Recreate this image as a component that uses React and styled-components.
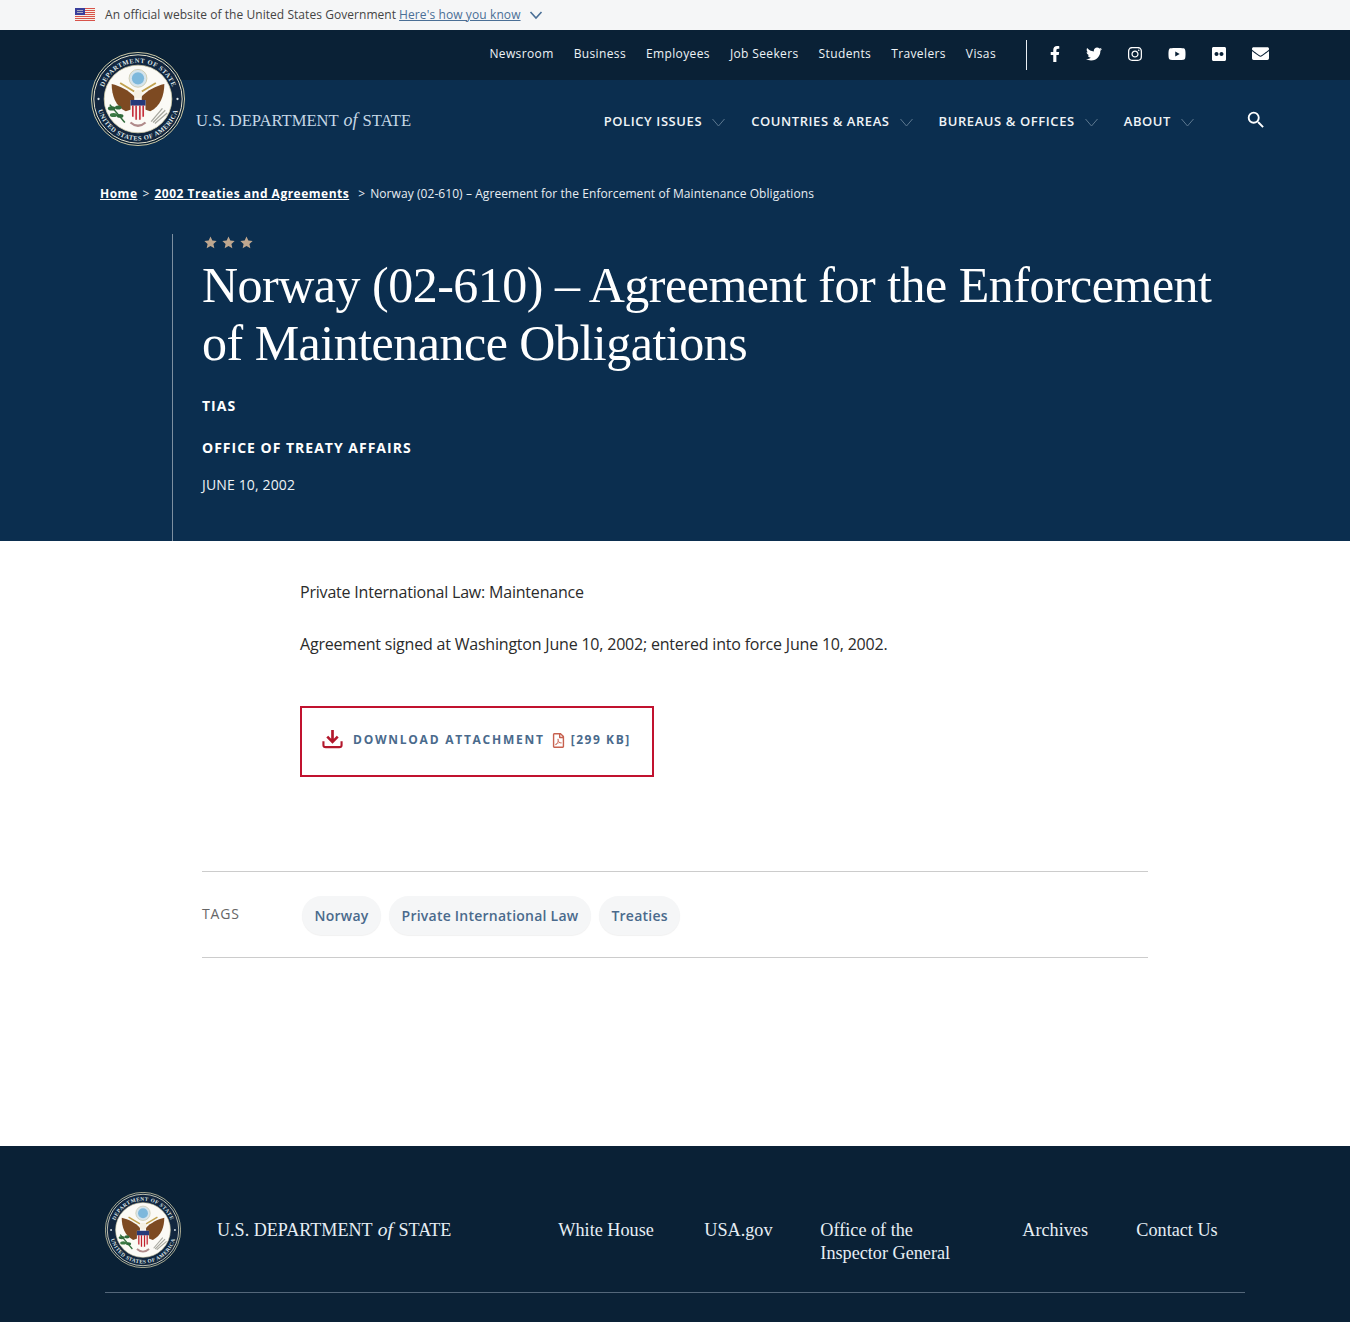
import React from 'react';
import styled, { createGlobalStyle } from 'styled-components';
import { FaFacebookF, FaTwitter, FaInstagram, FaYoutube, FaFlickr, FaEnvelope, FaRegFilePdf } from 'react-icons/fa';
import { MdSearch } from 'react-icons/md';

const GlobalStyle = createGlobalStyle`
  html, body { margin: 0; padding: 0; background: #fff; }
  body { font-family: "Open Sans", "Liberation Sans", sans-serif; color: #222; }
  * { box-sizing: border-box; }
  a { color: inherit; }
`;

const SERIF = '"Liberation Serif", "Times New Roman", serif';

const GovBanner = styled.div`
  height: 30px;
  background: #f5f6f7;
  display: flex;
  align-items: center;
  padding: 0 0 2px 75px;
  font-size: 12px;
  letter-spacing: 0.05px;
  color: #444;
`;
const GovText = styled.span`
  margin-left: 10px;
  white-space: nowrap;
`;
const GovLink = styled.a`
  margin-left: 3px;
  letter-spacing: 0.1px;
  color: #4a6f96;
  text-decoration: underline;
`;
const GovChevron = styled.svg`
  margin: 2px 0 0 8px;
  width: 14px;
  height: 10px;
`;

const Header = styled.header`
  position: relative;
`;
const TopBar = styled.div`
  height: 50px;
  background: #0a2136;
  display: flex;
  align-items: center;
  justify-content: flex-end;
  padding: 0 65px 3px 0;
`;
const TopLinks = styled.nav`
  display: flex;
  gap: 20px;
  font-size: 12px;
  letter-spacing: 0.37px;
  color: #eef3f7;
`;
const TopDivider = styled.div`
  width: 1px;
  height: 30px;
  background: #e8eef3;
  margin: 3px 14px 0 30px;
`;
const Socials = styled.div`
  display: flex;
  align-items: center;
  color: #fff;
`;
const SocialSlot = styled.span`
  width: ${p => p.$w}px;
  display: flex;
  justify-content: center;
  font-size: ${p => p.$size || 16}px;
`;
const SealSlot = styled.div`
  position: absolute;
  left: ${p => p.$x}px;
  top: ${p => p.$y}px;
  line-height: 0;
`;

const Hero = styled.section`
  background: #0b2e4f;
  height: 461px;
  color: #fff;
`;
const MainNav = styled.div`
  height: 98px;
  display: flex;
  align-items: flex-start;
  padding: 0 85px 0 196px;
`;
const Wordmark = styled.div`
  font-family: ${SERIF};
  color: ${p => p.$footer ? '#e6eef4' : '#c5d8e6'};
  font-size: ${p => p.$footer ? 18.1 : 16.6}px;
  white-space: nowrap;
  em { font-size: 1.08em; margin: 0 1px; }
`;
const HeaderWordmark = styled(Wordmark)`
  margin-top: 30px;
`;
const NavItems = styled.nav`
  margin-left: auto;
  margin-top: 31px;
  display: flex;
  align-items: center;
  gap: 26px;
  font-size: 13px;
  font-weight: 600;
  letter-spacing: 0.58px;
  text-transform: uppercase;
  color: #f0f4f7;
`;
const NavItem = styled.span`
  display: flex;
  align-items: center;
  gap: 10px;
  white-space: nowrap;
`;
const NavChevron = styled.svg`
  width: 13px;
  height: 9px;
  margin-top: 2px;
`;
const SearchWrap = styled.span`
  margin-left: 25px;
  margin-top: -2px;
  margin-right: -2px;
  display: flex;
  font-size: 22px;
  color: #fff;
`;

const Crumbs = styled.div`
  padding-left: 100px;
  height: 56px;
  padding-top: 7px;
  font-size: 12px;
  letter-spacing: 0.07px;
  color: #e8edf2;
  white-space: nowrap;
`;
const CrumbLink = styled.a`
  font-weight: 700;
  letter-spacing: 0.5px;
  color: #fff;
  text-decoration: underline;
`;
const CrumbSep = styled.span`
  margin: 0 ${p => p.$right || 5}px 0 ${p => p.$left || 5}px;
`;
const HeroBody = styled.div`
  margin-left: 172px;
  border-left: 1px solid #7d8fa0;
  padding-left: 29px;
  height: 307px;
`;
const Stars = styled.div`
  display: flex;
  gap: 5px;
  padding-left: 2px;
  padding-top: 2px;
  height: 18px;
  color: #bfa78f;
`;
const Title = styled.h1`
  margin: 4px 0 0;
  width: 1030px;
  font-family: ${SERIF};
  font-weight: 400;
  font-size: 50px;
  line-height: 58px;
  letter-spacing: -0.5px;
  color: #fff;
`;
const HeroLabel = styled.div`
  font-size: 14px;
  font-weight: 700;
  letter-spacing: 1px;
  text-transform: uppercase;
  line-height: 20px;
  margin-top: ${p => p.$top}px;
`;
const HeroDate = styled.div`
  font-size: 14px;
  letter-spacing: 0.15px;
  line-height: 20px;
  margin-top: 17px;
  color: #eef2f6;
`;

const Main = styled.main`
  height: 605px;
  padding-top: 39px;
`;
const Content = styled.div`
  padding-left: 300px;
  font-size: 16px;
  line-height: 24px;
  letter-spacing: -0.2px;
  color: #2b2b2b;
`;
const Para = styled.p`
  margin: 0 0 28px;
`;
const DownloadBox = styled.a`
  margin-top: 50px;
  width: 354px;
  height: 71px;
  border: 2px solid #c1122f;
  display: flex;
  align-items: flex-start;
  padding: 20px 0 0 20px;
  text-decoration: none;
`;
const DownloadIcon = styled.svg`
  width: 21px;
  height: 21px;
  flex: none;
`;
const DownloadText = styled.span`
  margin-left: 10px;
  margin-top: 3px;
  font-size: 12px;
  line-height: 18px;
  font-weight: 700;
  letter-spacing: 1.75px;
  color: #4a6a8c;
  white-space: nowrap;
`;
const PdfWrap = styled.span`
  display: flex;
  margin: 5px 5px 0 6px;
  font-size: 15px;
  color: #c7614f;
`;
const DownloadSize = styled(DownloadText)`
  margin-left: 0;
  letter-spacing: 1.55px;
`;

const TagsRow = styled.div`
  margin: 94px 202px 0;
  height: 87px;
  border-top: 1px solid #ccc;
  border-bottom: 1px solid #ccc;
  display: flex;
  align-items: center;
`;
const TagsLabel = styled.div`
  width: 100px;
  font-size: 14px;
  letter-spacing: 0.8px;
  color: #666;
  margin-top: -2px;
`;
const Tags = styled.div`
  display: flex;
  gap: 8px;
  padding-top: 1px;
`;
const Tag = styled.a`
  height: 39px;
  padding: 0 12.5px;
  border-radius: 20px;
  background: #f5f6f7;
  box-shadow: 0 1px 1px rgba(0, 0, 0, 0.06);
  display: flex;
  align-items: center;
  font-size: 14px;
  font-weight: 600;
  letter-spacing: 0.24px;
  color: #4a6a8c;
`;

const Footer = styled.footer`
  position: relative;
  height: 176px;
  background: #0a2136;
  padding: 0 105px;
`;
const FooterTop = styled.div`
  height: 147px;
  border-bottom: 1px solid #54677a;
  display: flex;
  align-items: flex-start;
  padding-left: 112px;
`;
const FooterWordmark = styled(Wordmark)`
  margin-top: 73px;
`;
const FooterLinks = styled.nav`
  margin-left: 107px;
  margin-top: 73px;
  display: flex;
  font-family: ${SERIF};
  font-size: 18.2px;
  line-height: 23px;
  color: #e6eef4;
`;
const FooterLink = styled.a`
  width: ${p => p.$w}px;
  padding-right: ${p => p.$pad || 0}px;
  flex: none;
`;

const Flag = () => (
  <svg width="20" height="13" viewBox="0 0 20 13">
    <rect width="20" height="13" fill="#f6efe6" />
    {[0, 2, 4, 6, 8, 10, 12].map(y => <rect key={y} y={y} width="20" height="1" fill="#d8534a" />)}
    <rect width="10" height="7" fill="#3a3f9c" />
    <rect x="2" y="2" width="6" height="1" fill="#aab" />
    <rect x="2" y="4" width="6" height="1" fill="#aab" />
  </svg>
);

const Chevron = () => (
  <NavChevron viewBox="0 0 13 9">
    <polyline points="0.5,1 6.5,8 12.5,1" fill="none" stroke="#5d7890" strokeWidth="1" />
  </NavChevron>
);

const Seal = ({ size, id }) => (
  <svg width={size} height={size} viewBox="0 0 100 100">
    <defs>
      <path id={`${id}-top`} d="M 11.5 50 A 38.5 38.5 0 0 1 88.5 50" />
      <path id={`${id}-bot`} d="M 6 50 A 44 44 0 0 0 94 50" />
    </defs>
    <circle cx="50" cy="50" r="49.5" fill="#0a2136" stroke="#d9d3ae" strokeWidth="1" />
    <circle cx="50" cy="50" r="47" fill="#12263f" stroke="#f3efd8" strokeWidth="1" />
    <circle cx="50" cy="50" r="36" fill="#fbfaf6" stroke="#d9d3ae" strokeWidth="0.8" />
    <text fontFamily={SERIF} fontSize="7" fontWeight="700" letterSpacing="0.6" fill="#dfe6ea">
      <textPath href={`#${id}-top`} startOffset="50%" textAnchor="middle">DEPARTMENT OF STATE</textPath>
    </text>
    <text fontFamily={SERIF} fontSize="7" fontWeight="700" letterSpacing="0.5" fill="#dfe6ea">
      <textPath href={`#${id}-bot`} startOffset="50%" textAnchor="middle">UNITED STATES OF AMERICA</textPath>
    </text>
    <circle cx="8" cy="50" r="1.2" fill="#dfe6ea" />
    <circle cx="92" cy="50" r="1.2" fill="#dfe6ea" />
    {/* crest */}
    <circle cx="50" cy="28" r="9.5" fill="#d5e4ec" stroke="#c9c3a0" strokeWidth="0.8" />
    <circle cx="50" cy="28" r="6.5" fill="#7db8dc" />
    {/* wings */}
    <path d="M46 47 C40 41 31 36 22 34 C22 46 26 58 37 63 L46 60 Z" fill="#7d4a22" />
    <path d="M54 47 C60 41 69 36 78 34 C78 46 74 58 63 63 L54 60 Z" fill="#7d4a22" />
    <path d="M31 33 L46 42 M69 33 L54 42" stroke="#c2a24f" strokeWidth="2" />
    <circle cx="50" cy="45" r="4.5" fill="#f5f1e4" />
    {/* shield */}
    <path d="M42 51 H58 V64 C58 69 53 72 50 73 C47 72 42 69 42 64 Z" fill="#f7f4ee" />
    <rect x="42" y="51" width="16" height="6" fill="#253a7a" />
    <path d="M44.5 57 V69 M48 57 V72 M52 57 V72 M55.5 57 V69" stroke="#c2202f" strokeWidth="1.6" />
    {/* olive and arrows */}
    <path d="M20 56 L36 75" stroke="#2f6b3a" strokeWidth="1.6" />
    <ellipse cx="22" cy="60" rx="4" ry="2.2" fill="#2f6b3a" />
    <ellipse cx="24" cy="67" rx="4" ry="2.2" fill="#3c7a44" />
    <ellipse cx="29" cy="59" rx="3.5" ry="2.2" fill="#2f6b3a" />
    <ellipse cx="31" cy="68" rx="3.5" ry="2" fill="#2f6b3a" />
    <path d="M64 74 L76 60 M66 75 L79 62 M68 76 L81 65" stroke="#a8a8a0" strokeWidth="1.4" />
    <path d="M42 75 Q50 82 58 75" stroke="#b08a8a" strokeWidth="2.4" fill="none" />
  </svg>
);

const WordmarkText = () => <>U.S. DEPARTMENT <em>of</em> STATE</>;

const topLinks = ['Newsroom', 'Business', 'Employees', 'Job Seekers', 'Students', 'Travelers', 'Visas'];
const navItems = ['Policy Issues', 'Countries & Areas', 'Bureaus & Offices', 'About'];
const tags = ['Norway', 'Private International Law', 'Treaties'];
const footerLinks = [
  { label: 'White House', w: 146 },
  { label: 'USA.gov', w: 116 },
  { label: 'Office of the Inspector General', w: 202, pad: 50 },
  { label: 'Archives', w: 114 },
  { label: 'Contact Us', w: 90 },
];

export default function App() {
  return (
    <>
      <GlobalStyle />
      <GovBanner>
        <Flag />
        <GovText>An official website of the United States Government</GovText>
        <GovLink href="#">Here's how you know</GovLink>
        <GovChevron viewBox="0 0 14 10">
          <polyline points="1.5,2 7,8 12.5,2" fill="none" stroke="#4a6f96" strokeWidth="1.6" />
        </GovChevron>
      </GovBanner>

      <Header>
        <TopBar>
          <TopLinks>
            {topLinks.map(l => <span key={l}>{l}</span>)}
          </TopLinks>
          <TopDivider />
          <Socials>
            <SocialSlot $w={28} $size={16}><FaFacebookF /></SocialSlot>
            <SocialSlot $w={50} $size={16}><FaTwitter /></SocialSlot>
            <SocialSlot $w={32} $size={16}><FaInstagram /></SocialSlot>
            <SocialSlot $w={52} $size={18}><FaYoutube /></SocialSlot>
            <SocialSlot $w={32} $size={16}><FaFlickr /></SocialSlot>
            <SocialSlot $w={50} $size={17}><FaEnvelope /></SocialSlot>
          </Socials>
        </TopBar>
        <SealSlot $x={91} $y={22}><Seal size={94} id="head" /></SealSlot>
        <Hero>
          <MainNav>
            <HeaderWordmark><WordmarkText /></HeaderWordmark>
            <NavItems>
              {navItems.map(n => (
                <NavItem key={n}>{n}<Chevron /></NavItem>
              ))}
              <SearchWrap><MdSearch /></SearchWrap>
            </NavItems>
          </MainNav>
          <Crumbs>
            <CrumbLink href="#">Home</CrumbLink>
            <CrumbSep>&gt;</CrumbSep>
            <CrumbLink href="#">2002 Treaties and Agreements</CrumbLink>
            <CrumbSep $left={9}>&gt;</CrumbSep>
            Norway (02-610) – Agreement for the Enforcement of Maintenance Obligations
          </Crumbs>
          <HeroBody>
            <Stars>
              {[0, 1, 2].map(i => (
                <svg key={i} width="13" height="13" viewBox="0 0 24 24" fill="currentColor">
                  <path d="M12 1l3.4 7.4 8 .9-6 5.4 1.7 7.9L12 18.6l-7.1 4 1.7-7.9-6-5.4 8-.9z" />
                </svg>
              ))}
            </Stars>
            <Title>Norway (02-610) – Agreement for the Enforcement of Maintenance Obligations</Title>
            <HeroLabel $top={24}>TIAS</HeroLabel>
            <HeroLabel $top={22}>Office of Treaty Affairs</HeroLabel>
            <HeroDate>JUNE 10, 2002</HeroDate>
          </HeroBody>
        </Hero>
      </Header>

      <Main>
        <Content>
          <Para>Private International Law: Maintenance</Para>
          <Para>Agreement signed at Washington June 10, 2002; entered into force June 10, 2002.</Para>
          <DownloadBox href="#">
            <DownloadIcon viewBox="0 0 22 22">
              <path d="M11 2 V14 M5.5 9 L11 14.5 L16.5 9" fill="none" stroke="#b3182c" strokeWidth="2.8" />
              <path d="M1.5 14 V18 C1.5 19.5 2.5 20 4 20 H18 C19.5 20 20.5 19.5 20.5 18 V14" fill="none" stroke="#b3182c" strokeWidth="2.2" />
            </DownloadIcon>
            <DownloadText>DOWNLOAD ATTACHMENT</DownloadText>
            <PdfWrap><FaRegFilePdf /></PdfWrap>
            <DownloadSize>[299 KB]</DownloadSize>
          </DownloadBox>
        </Content>
        <TagsRow>
          <TagsLabel>TAGS</TagsLabel>
          <Tags>
            {tags.map(t => <Tag key={t}>{t}</Tag>)}
          </Tags>
        </TagsRow>
      </Main>

      <Footer>
        <SealSlot $x={105} $y={46}><Seal size={76} id="foot" /></SealSlot>
        <FooterTop>
          <FooterWordmark $footer><WordmarkText /></FooterWordmark>
          <FooterLinks>
            {footerLinks.map(f => <FooterLink key={f.label} $w={f.w} $pad={f.pad}>{f.label}</FooterLink>)}
          </FooterLinks>
        </FooterTop>
      </Footer>
    </>
  );
}
